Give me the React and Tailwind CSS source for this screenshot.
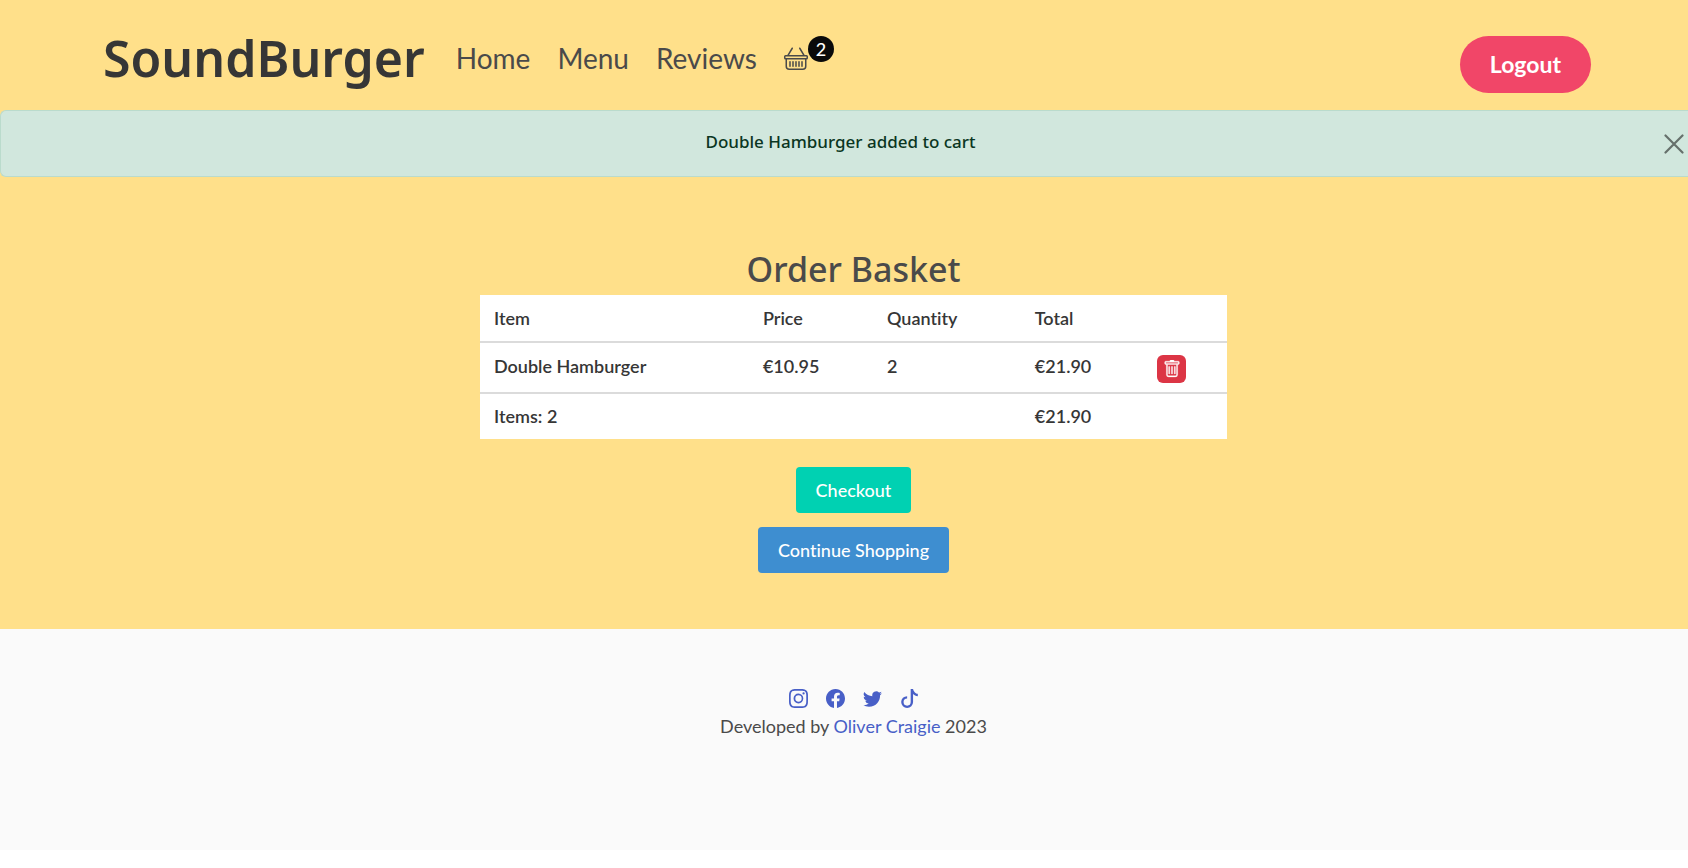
import { BsBasket, BsTrash, BsInstagram, BsFacebook, BsTwitter, BsTiktok } from "react-icons/bs";

const links = ["Home", "Menu", "Reviews"];

const socials = [
  { label: "Instagram", Icon: BsInstagram },
  { label: "Facebook", Icon: BsFacebook },
  { label: "Twitter", Icon: BsTwitter },
  { label: "TikTok", Icon: BsTiktok },
];

function Header() {
  return (
    <header className="flex h-[110px] items-center pt-[6px] pl-[103px] pr-[97px]">
      <a href="#" className="font-['Noto_Sans',sans-serif] text-[50px] leading-[72px] font-semibold text-[#363636]">
        SoundBurger
      </a>
      <nav className="ml-[31px] flex items-center gap-[27px] text-[28px] text-[#4a4a4a]">
        {links.map((label) => (
          <a key={label} href="#">{label}</a>
        ))}
        <a href="#" aria-label="Basket, 2 items" className="relative">
          <BsBasket className="size-6" />
          <span className="absolute -top-[10px] left-6 flex size-[26px] items-center justify-center rounded-full bg-[#0a0a0a] text-lg font-medium text-white">
            2
          </span>
        </a>
      </nav>
      <button className="mt-[13px] ml-auto rounded-full bg-[#f14668] px-[30px] py-3 text-[23px] leading-[33px] font-bold text-white">
        Logout
      </button>
    </header>
  );
}

function Alert() {
  return (
    <div role="alert" className="flex h-[67px] items-center rounded-l-md border border-r-0 border-[#badbcc] bg-[#d1e7dd] pr-1">
      <p className="flex-1 pb-1 pl-4 text-center font-['Noto_Sans',sans-serif] text-[17px] font-medium text-[#0a3622]">
        Double Hamburger added to cart
      </p>
      <button aria-label="Close" className="text-[#66706b]">
        <svg viewBox="0 0 20 20" className="size-5" fill="none" stroke="currentColor" strokeWidth="2.2" strokeLinecap="round">
          <path d="M1.5 1.5l17 17M18.5 1.5l-17 17" />
        </svg>
      </button>
    </div>
  );
}

function Basket() {
  return (
    <main className="flex flex-col items-center pt-[67px] pb-14 pl-[19px]">
      <h1 className="font-['Noto_Sans',sans-serif] text-[34px] leading-[51px] font-medium text-[#4a4a4a]">
        Order Basket
      </h1>
      <table className="w-[45%] max-w-[747px] table-fixed bg-white text-left text-lg leading-[27px] font-semibold text-[#363636] [&_td]:px-[14px] [&_th]:px-[14px] [&_th]:font-semibold">
        <colgroup>
          <col className="w-[36%]" />
          <col className="w-[16.6%]" />
          <col className="w-[19.8%]" />
          <col className="w-[16.4%]" />
          <col className="w-[11.2%]" />
        </colgroup>
        <thead>
          <tr className="h-[47px] border-b-2 border-[#dbdbdb]">
            <th scope="col">Item</th>
            <th scope="col">Price</th>
            <th scope="col">Quantity</th>
            <th scope="col">Total</th>
            <td />
          </tr>
        </thead>
        <tbody>
          <tr className="h-[51px] border-b-2 border-[#dbdbdb] [&>td]:pt-[10px] [&>td]:align-top">
            <td>Double Hamburger</td>
            <td>€10.95</td>
            <td>2</td>
            <td>€21.90</td>
            <td>
              <button aria-label="Remove Double Hamburger" className="mt-[2px] flex h-7 w-[29px] items-center justify-center rounded-md bg-[#dc3545] text-white">
                <BsTrash className="size-[18px]" strokeWidth="0.3" />
              </button>
            </td>
          </tr>
          <tr className="h-[46px]">
            <td colSpan={3}>Items: 2</td>
            <td>€21.90</td>
            <td />
          </tr>
        </tbody>
      </table>
      <div className="mt-7 flex flex-col items-center gap-[14px] text-lg leading-[30px] font-medium text-white">
        <button className="rounded bg-[#00d1b2] px-5 py-2">Checkout</button>
        <button className="rounded bg-[#3e8ed0] px-5 py-2">Continue Shopping</button>
      </div>
    </main>
  );
}

function Footer() {
  return (
    <footer className="flex flex-col items-center bg-[#fafafa] pt-[60px] pb-[110px] pl-[19px] text-lg text-[#4a4a4a]">
      <div className="flex gap-[18px] text-[#485fc7]">
        {socials.map(({ label, Icon }) => (
          <a key={label} href="#" aria-label={label}>
            <Icon className="size-[19px]" />
          </a>
        ))}
      </div>
      <p className="mt-1 leading-7">
        Developed by <a href="#" className="text-[#485fc7]">Oliver Craigie</a> 2023
      </p>
    </footer>
  );
}

export default function App() {
  return (
    <div className="min-h-screen bg-white font-['Lato',sans-serif] [font-variant-ligatures:none]">
      <div className="bg-[#ffe08a]">
        <Header />
        <Alert />
        <Basket />
      </div>
      <Footer />
    </div>
  );
}
